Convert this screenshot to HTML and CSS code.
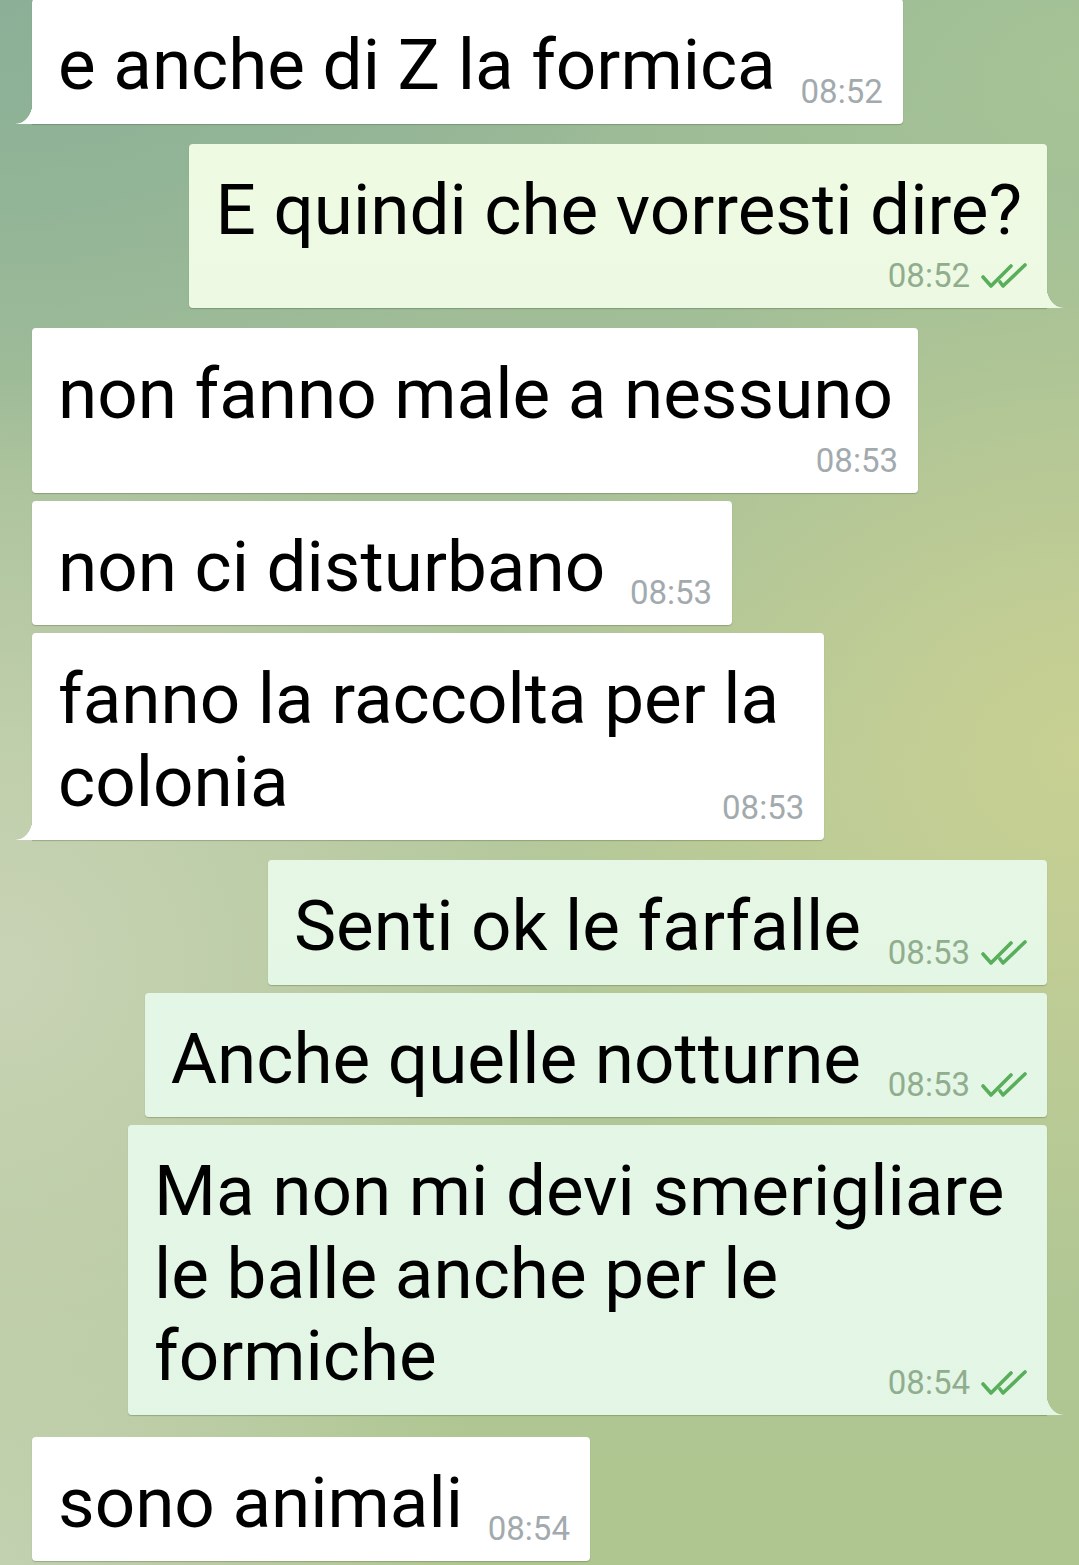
FILE: index.html
```html
<!DOCTYPE html>
<html lang="it">
<head>
<meta charset="utf-8">
<title>Chat</title>
<link rel="stylesheet" href="styles.css">
</head>
<body>
<main class="chat">
  <div class="bubble bubble--in bubble--tail">
    <div class="text">e anche di Z la formica</div>
    <div class="meta"><span class="time">08:52</span></div>
  </div>

  <div class="bubble bubble--out bubble--tail bubble--stack group-start">
    <div class="text">E quindi che vorresti dire?</div>
    <div class="meta"><span class="time">08:52</span><svg class="ticks" viewBox="0 0 46 26" width="46" height="26"><path d="M2 14 L10 23 L30 3"/><path d="M19 19 L22 23 L44 2"/></svg></div>
  </div>

  <div class="bubble bubble--in bubble--stack group-start">
    <div class="text">non fanno male a nessuno</div>
    <div class="meta"><span class="time">08:53</span></div>
  </div>
  <div class="bubble bubble--in">
    <div class="text">non ci disturbano</div>
    <div class="meta"><span class="time">08:53</span></div>
  </div>
  <div class="bubble bubble--in bubble--tail bubble--wide">
    <div class="text">fanno la raccolta per la<br>colonia</div>
    <div class="meta"><span class="time">08:53</span></div>
  </div>

  <div class="bubble bubble--out group-start">
    <div class="text">Senti ok le farfalle</div>
    <div class="meta"><span class="time">08:53</span><svg class="ticks" viewBox="0 0 46 26" width="46" height="26"><path d="M2 14 L10 23 L30 3"/><path d="M19 19 L22 23 L44 2"/></svg></div>
  </div>
  <div class="bubble bubble--out">
    <div class="text">Anche quelle notturne</div>
    <div class="meta"><span class="time">08:53</span><svg class="ticks" viewBox="0 0 46 26" width="46" height="26"><path d="M2 14 L10 23 L30 3"/><path d="M19 19 L22 23 L44 2"/></svg></div>
  </div>
  <div class="bubble bubble--out bubble--tail">
    <div class="text">Ma non mi devi smerigliare le balle anche per le <span class="last">formiche</span></div>
    <div class="meta"><span class="time">08:54</span><svg class="ticks" viewBox="0 0 46 26" width="46" height="26"><path d="M2 14 L10 23 L30 3"/><path d="M19 19 L22 23 L44 2"/></svg></div>
  </div>

  <div class="bubble bubble--in group-start group-start--wide">
    <div class="text">sono animali</div>
    <div class="meta"><span class="time">08:54</span></div>
  </div>
</main>
</body>
</html>
```

FILE: styles.css
```css
html, body {
  margin: 0;
  padding: 0;
}

body {
  width: 1079px;
  height: 1565px;
  overflow: hidden;
  font-family: Roboto, "Noto Sans", "Liberation Sans", sans-serif;
  color: #000;
  background-color: #abc297;
  background-image:
    radial-gradient(ellipse 60% 30% at 0% 0%, #8bb097 0%, rgba(139, 176, 151, 0) 100%),
    radial-gradient(ellipse 55% 38% at 0% 62%, #c8d3b5 0%, rgba(200, 211, 181, 0) 100%),
    radial-gradient(ellipse 45% 30% at 0% 100%, #c2d1b0 0%, rgba(194, 209, 176, 0) 100%),
    radial-gradient(ellipse 55% 35% at 100% 48%, #c8d092 0%, rgba(200, 208, 146, 0) 100%),
    radial-gradient(ellipse 55% 30% at 100% 5%, #a6c396 0%, rgba(166, 195, 150, 0) 100%),
    linear-gradient(180deg, #95b695 0%, #b2c79b 50%, #afc690 100%);
}

.chat {
  display: flex;
  flex-direction: column;
  align-items: flex-start;
  gap: 8px;
  padding: 0 32px;
  margin-top: -1px;
}

.group-start {
  margin-top: 12px;
}

.group-start--wide {
  margin-top: 14px;
}

.bubble {
  position: relative;
  display: grid;
  box-sizing: border-box;
  max-width: 919px;
  padding: 25px 20px 17px 26px;
  border-radius: 4px;
  box-shadow: 0 1px 1px rgba(50, 70, 40, 0.28);
}

.bubble--in {
  background: #ffffff;
}

.bubble--out {
  align-self: flex-end;
  background: linear-gradient(180deg, #f1fbe2 0px, #eaf8e3 500px, #e4f6e5 1000px, #e3f5e5 1565px) fixed;
}

.text {
  grid-area: 1 / 1;
  font-size: 71px;
  line-height: 82.5px;
  padding-right: 5px;
}

.text::after {
  content: "";
  display: inline-block;
  width: 102px;
}

.bubble--out .text::after {
  width: 161px;
}

.bubble--stack .text::after {
  display: none;
}

.meta {
  grid-area: 1 / 1;
  justify-self: end;
  align-self: end;
  display: flex;
  align-items: center;
  gap: 11px;
  height: 30px;
}

.bubble--stack .meta {
  grid-area: 2 / 1;
  margin-top: 10px;
}

.time {
  font-size: 33px;
  line-height: 30px;
  color: #a2aaae;
}

.bubble--out .time {
  color: #90ad8e;
}

.ticks {
  display: block;
  fill: none;
  stroke: #58ae5a;
  stroke-width: 3.6;
  stroke-linecap: round;
  stroke-linejoin: round;
}

.bubble--wide .text {
  padding-right: 25px;
}

/* bubble tails */
.bubble--tail.bubble--in {
  border-bottom-left-radius: 0;
}

.bubble--tail.bubble--out {
  border-bottom-right-radius: 0;
}

.bubble--tail::after {
  content: "";
  position: absolute;
  bottom: 0;
  width: 17px;
  height: 23px;
  background: inherit;
}

.bubble--in.bubble--tail::after {
  left: -16px;
  -webkit-mask: radial-gradient(ellipse 17px 23px at 0 0, transparent 97%, #000 100%);
  mask: radial-gradient(ellipse 17px 23px at 0 0, transparent 97%, #000 100%);
}

.bubble--out.bubble--tail::after {
  right: -16px;
  -webkit-mask: radial-gradient(ellipse 17px 23px at 100% 0, transparent 97%, #000 100%);
  mask: radial-gradient(ellipse 17px 23px at 100% 0, transparent 97%, #000 100%);
}
```
